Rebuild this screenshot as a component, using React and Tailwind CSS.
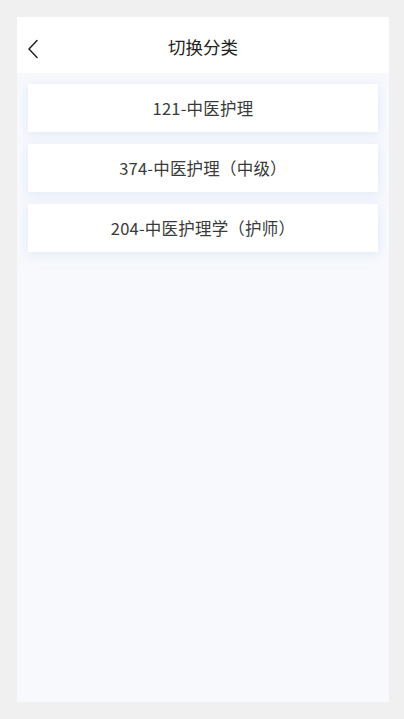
export default function App() {
  const items = ["121-中医护理", "374-中医护理（中级）", "204-中医护理学（护师）"];

  return (
    <div
      className="w-[404px] h-[719px] bg-[#f0f0f0] px-[17px] pt-[17px] pb-[17px]"
      style={{ fontFamily: '"Noto Sans CJK SC", "Noto Sans", sans-serif' }}
    >
      <div className="flex h-full w-[372px] flex-col overflow-hidden bg-[#f7f9fd]">
        {/* Header */}
        <div className="relative flex h-[56px] shrink-0 items-center justify-center bg-white">
          <svg
            className="absolute left-[9px] top-[22px]"
            width="14"
            height="20"
            viewBox="0 0 14 20"
            fill="none"
            stroke="#222"
            strokeWidth="1.5"
            strokeLinecap="round"
            strokeLinejoin="round"
          >
            <path d="M11 1.5 L3 10 L11 18.5" />
          </svg>
          <span className="pt-[5px] text-[17.5px] font-normal text-[#222]">切换分类</span>
        </div>

        {/* List */}
        <div className="flex flex-col gap-[12px] px-[11px] pt-[11px]">
          {items.map((item, index) => (
            <div
              key={index}
              className="flex h-[48px] items-center justify-center bg-white text-[16.5px] tracking-[0.2px] text-[#3a3a3a] shadow-[0_2px_10px_rgba(205,218,242,0.5)]"
            >
              {item}
            </div>
          ))}
        </div>
      </div>
    </div>
  );
}
